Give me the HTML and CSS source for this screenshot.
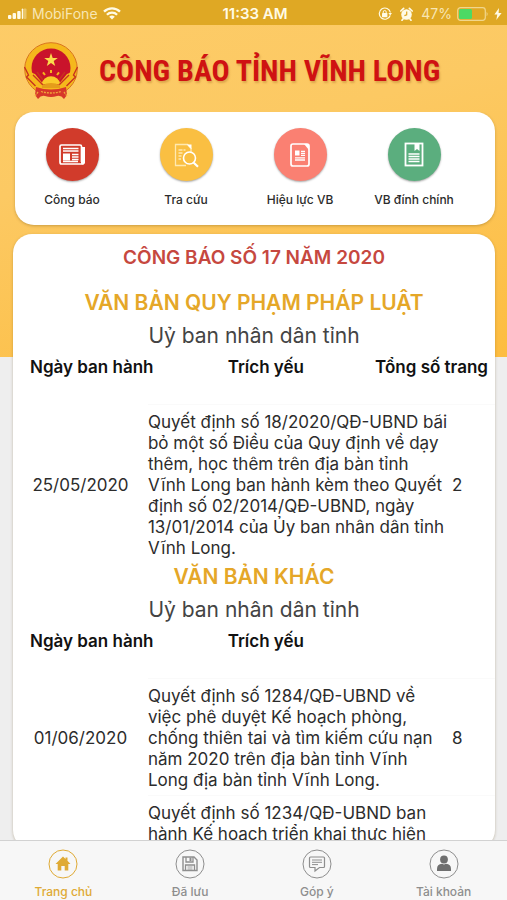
FILE: index.html
```html
<!DOCTYPE html>
<html lang="vi">
<head>
<meta charset="utf-8">
<meta name="viewport" content="width=device-width, initial-scale=1">
<title>Công báo tỉnh Vĩnh Long</title>
<link rel="stylesheet" href="styles.css">
</head>
<body>
<div class="app">
  <div class="status">
    <div class="status-side">
      <svg class="signal" width="19" height="12" viewBox="0 0 19 12"><g fill="#fffbe6"><rect x="0" y="7" width="3.4" height="4" rx="1"/><rect x="4.6" y="5" width="3.4" height="6" rx="1"/><rect x="9.2" y="3" width="3.4" height="8" rx="1"/><rect x="13.8" y="0.500" width="1.400" height="10.500" rx=".7"/><rect x="15.500" y="0.500" width="3" height="10.500" rx="1" opacity=".35"/></g></svg>
      <span class="carrier">MobiFone</span>
      <svg width="18" height="13" viewBox="0 0 18 13"><g fill="none" stroke="#fffbe6" stroke-width="2.300"><path d="M1 4.700a11.500 11.500 0 0 1 16 0"/><path d="M3.900 7.800a7.300 7.300 0 0 1 10.200 0"/></g><path d="M9 12.500L6.200 9.800a4 4 0 0 1 5.600 0z" fill="#fffbe6"/></svg>
    </div>
    <span class="clock">11:33 AM</span>
    <div class="status-side status-end">
      <svg width="14" height="14" viewBox="0 0 14 14"><path d="M12.200 8.500A5.600 5.600 0 1 1 12.400 5.500" fill="none" stroke="#fffbe6" stroke-width="1.200"/><path d="M10.400 6h3.600l-1.800 2.600z" fill="#fffbe6"/><rect x="4" y="6" width="5.400" height="4.200" rx=".6" fill="#fffbe6"/><path d="M5.200 6.200V5a1.500 1.500 0 0 1 3 0v1.200" fill="none" stroke="#fffbe6"/></svg>
      <svg class="alarm" width="13" height="14" viewBox="0 0 13 14"><circle cx="6.500" cy="7.500" r="5.300" fill="#fffbe6"/><path d="M.8 4L3.600 1.400M12.200 4L9.400 1.400M3 12l-1 1.300M10 12l1 1.300" stroke="#fffbe6" stroke-width="1.700" stroke-linecap="round"/><path d="M6.700 4.400v3.400l-2.300.8" fill="none" stroke="#dfa824" stroke-width="1.200"/></svg>
      <span class="percent">47%</span>
      <svg width="32" height="14" viewBox="0 0 32 14"><rect x=".7" y=".7" width="27.600" height="12.600" rx="2.800" fill="none" stroke="#f1d68d" stroke-width="1.200"/><rect x="2" y="2" width="13" height="10" rx="1.500" fill="#4cd964"/><path d="M29.600 4.700q2 2.300 0 4.600z" fill="#f1d68d"/></svg>
      <svg width="8" height="12" viewBox="0 0 8 12"><path d="M5 0L.4 6.600h2.900L2.300 12 7.600 5H4.600z" fill="#fffbe6"/></svg>
    </div>
  </div>

  <header class="brand">
    <svg class="emblem" width="56" height="58" viewBox="0 0 56 58">
      <circle cx="28" cy="27" r="26.300" fill="#f5b81c" stroke="#d9751f" stroke-width="1"/>
      <circle cx="28" cy="26" r="19.500" fill="#c9132b"/>
      <path d="M28 11l1.700 4.900 5.100.1-4.100 3.100 1.500 5-4.200-3-4.200 3 1.500-5-4.100-3.100 5.100-.1z" fill="#fbdc4c"/>
      <path d="M18.500 42a9.700 9.700 0 0 1 19 0z" fill="#fbc92b"/>
      <path d="M28 31v-3M22 33l-2-2.600M34 33l2-2.600" stroke="#f5b81c" stroke-width="2"/>
      <path d="M2 25c4 1 6 6 10 7l9 11-7 6L5 39zM54 25c-4 1-6 6-10 7l-9 11 7 6 9-10z" fill="#f5b81c"/>
      <path d="M1.500 25l4 8-2 2 9 9M54.500 25l-4 8 2 2-9 9M10 33l10 10M46 33L36 43M14 30l6 8M42 30l-6 8" fill="none" stroke="#c8321f" stroke-width="1.400"/>
      <path d="M19 43q9-4 18 0v3H19z" fill="#e59c1a"/>
      <path d="M13 45q15 5 30 0l1 8-3 4q-3-4-7-3-6 2-12 0-4-1-7 3l-3-4z" fill="#d7372a"/>
      <path d="M18 49.500q10 3 20 0M12 54l3-4M44 54l-3-4" fill="none" stroke="#f0a63a" stroke-width="1.300" stroke-dasharray="2 1"/>
    </svg>
    <h1>CÔNG BÁO TỈNH VĨNH LONG</h1>
  </header>

  <main>
    <nav class="card menu" aria-label="Chức năng">
      <a href="#cong-bao"><span class="disc red"><svg width="28" height="24" viewBox="0 0 28 24"><path d="M24 4.500V19q0 2 1.500 2H3.500Q2 21 2 19V3.500Q2 2 3.500 2H22q1.500 0 1.500 1.500V19" fill="none" stroke="#fff" stroke-width="1.700"/><path d="M23.500 4H27v15.500q0 2-2 2t-2-2z" fill="#fff"/><path d="M5 5.500h15.500M5 8h15.500M14 11.500h6.500M14 14h6.500M14 16.500h6.500M5 18.500h15" stroke="#fff" stroke-width="1.500"/><rect x="5" y="10.500" width="7" height="7" fill="#fff"/></svg></span>Công báo</a>
      <a href="#tra-cuu"><span class="disc yellow"><svg width="26" height="26" viewBox="0 0 26 26"><path d="M13 23.500H2.500v-21h12l3.500 4V10" fill="none" stroke="#ffe9b0" stroke-width="1.300"/><path d="M14 2.500h4.500v4.700z" fill="#fff"/><path d="M5.500 8h7M5.500 11h4.500M5.500 14h3M5.500 17h2.500" stroke="#ffe9b0" stroke-width="1.500" stroke-dasharray="4 1"/><circle cx="16.500" cy="16" r="6" fill="none" stroke="#fff" stroke-width="1.600"/><path d="M20.500 20.500l4.500 4.300" stroke="#fff" stroke-width="2.200"/></svg></span>Tra cứu</a>
      <a href="#hieu-luc"><span class="disc pink"><svg width="20" height="24" viewBox="0 0 20 24"><rect x="1" y="1" width="18" height="22" rx="2" fill="none" stroke="#fff" stroke-width="1.700"/><path d="M14 1h5v6z" fill="#fff"/><rect x="5" y="7.500" width="4.500" height="5" fill="#fff"/><path d="M11 8.300h4M11 10.300h4M11 12.300h4M5 14.800h10M5 17h10" stroke="#fff" stroke-width="1.300"/></svg></span>Hiệu lực VB</a>
      <a href="#dinh-chinh"><span class="disc green"><svg width="20" height="25" viewBox="0 0 20 25"><rect x="1.500" y="1.500" width="17" height="22" fill="none" stroke="#fff" stroke-width="1.800"/><path d="M10.500 1.500h5V9L13 7l-2.500 2z" fill="#fff"/><path d="M4.500 12h11M4.500 14.500h11M4.500 17h11M4.500 19.500h11" stroke="#fff" stroke-width="1.300"/></svg></span>VB đính chính</a>
    </nav>

    <section class="card gazette">
      <h2>CÔNG BÁO SỐ 17 NĂM 2020</h2>

      <h3>VĂN BẢN QUY PHẠM PHÁP LUẬT</h3>
      <h4>Uỷ ban nhân dân tỉnh</h4>
      <table>
        <colgroup><col class="c-date"><col class="c-text"><col class="c-gap"><col class="c-pages"></colgroup>
        <thead><tr><th class="h-date">Ngày ban hành</th><th class="h-text">Trích yếu</th><th class="h-pages" colspan="2">Tổng số trang</th></tr></thead>
        <tbody>
          <tr><td class="date">25/05/2020</td><td class="text" colspan="2">Quyết định số 18/2020/QĐ-UBND bãi<br>bỏ một số Điều của Quy định về dạy<br>thêm, học thêm trên địa bàn tỉnh<br>Vĩnh Long ban hành kèm theo Quyết<br>định số 02/2014/QĐ-UBND, ngày<br>13/01/2014 của Ủy ban nhân dân tỉnh<br>Vĩnh Long.</td><td class="pages">2</td></tr>
        </tbody>
      </table>

      <h3 class="next">VĂN BẢN KHÁC</h3>
      <h4>Uỷ ban nhân dân tỉnh</h4>
      <table>
        <colgroup><col class="c-date"><col class="c-text"><col class="c-gap"><col class="c-pages"></colgroup>
        <thead><tr><th class="h-date">Ngày ban hành</th><th class="h-text">Trích yếu</th><td class="h-pages" colspan="2"></td></tr></thead>
        <tbody>
          <tr><td class="date">01/06/2020</td><td class="text" colspan="2">Quyết định số 1284/QĐ-UBND về<br>việc phê duyệt Kế hoạch phòng,<br>chống thiên tai và tìm kiếm cứu nạn<br>năm 2020 trên địa bàn tỉnh Vĩnh<br>Long địa bàn tỉnh Vĩnh Long.</td><td class="pages">8</td></tr>
          <tr><td class="date"></td><td class="text" colspan="2">Quyết định số 1234/QĐ-UBND ban<br>hành Kế hoạch triển khai thực hiện</td><td class="pages"></td></tr>
        </tbody>
      </table>
    </section>
  </main>

  <nav class="tabs" aria-label="Điều hướng">
    <a class="active" href="#trang-chu"><svg width="30" height="30" viewBox="0 0 30 30"><circle cx="15" cy="15" r="14" fill="none" stroke="currentColor"/><path d="M15 7.500l2.500 2.400V8.500h2v3.300l3 3.200h-2.200v6.500h-3.600V17h-3.400v4.500H9.700V15H7.500z" fill="currentColor"/></svg>Trang chủ</a>
    <a href="#da-luu"><svg width="30" height="30" viewBox="0 0 30 30"><g fill="none" stroke="currentColor"><circle cx="15" cy="15" r="14"/><path d="M8 8h11l3 3v10.500H8z" stroke-width="1.400"/><path d="M11 8v5h7V8M10.500 21.500V16h9v5.500" stroke-width="1.300"/><path d="M12.500 18h5M12.500 20h5" stroke-width=".8"/></g><path d="M14.500 8.500h2V12h-2z" fill="currentColor"/></svg>Đã lưu</a>
    <a href="#gop-y"><svg width="30" height="30" viewBox="0 0 30 30"><g fill="none" stroke="currentColor"><circle cx="15" cy="15" r="14"/><path d="M8.500 8h13q1 0 1 1v8.500q0 1-1 1h-4L13 22v-3.500H8.500q-1 0-1-1V9q0-1 1-1z" stroke-width="1.200"/><path d="M10 11h10M10 13.300h10M10 15.600h6"/></g></svg>Góp ý</a>
    <a href="#tai-khoan"><svg width="30" height="30" viewBox="0 0 30 30"><circle cx="15" cy="15" r="14" fill="none" stroke="currentColor"/><g fill="#6f6f6f"><circle cx="15" cy="10.500" r="3.900"/><path d="M8 22v-2q0-5 5-5.200l2 .8 2-.8q5 .2 5 5.200v2z"/></g></svg>Tài khoản</a>
  </nav>
</div>
</body>
</html>
```
FILE: styles.css
```css
* { box-sizing: border-box; }

body {
  margin: 0;
  background: #eeeeee;
  color: #2c2c2c;
  font-family: Inter, "Noto Sans", sans-serif;
}

a { color: inherit; text-decoration: none; }
svg { display: block; flex: none; }

.app {
  display: flex;
  flex-direction: column;
  height: 100vh;
  background: linear-gradient(165deg, #fdcc68 0%, #fcc963 40%, #fdbd40 100%) no-repeat top / 100% 357px;
}

.status {
  display: grid;
  grid-template-columns: 1fr auto 1fr;
  align-items: center;
  flex: none;
  height: 25px;
  padding: 2px 5px 0 8px;
  background: #dfa824;
  color: #fffbe6;
  font-size: 14px;
}
.status-side { display: flex; align-items: center; gap: 5px; }
.status-end { justify-content: flex-end; }
.carrier, .percent { color: #f8e6b3; }
.clock { font-size: 15px; font-weight: 600; }
.alarm { margin: 0 3px; }

.brand {
  display: flex;
  align-items: center;
  gap: 20px;
  flex: none;
  height: 87px;
  padding: 4px 20px 0 23px;
}
h1 {
  margin: 0;
  color: #cf1212;
  font-family: "Roboto Condensed", "Liberation Sans Narrow", Roboto, sans-serif;
  font-size: 30px;
  font-weight: 700;
  line-height: 36px;
  white-space: nowrap;
  text-shadow: 1px 2px 2px rgba(150, 90, 20, 0.3);
}

main {
  display: flex;
  flex-direction: column;
  flex: 1;
  gap: 9px;
  min-height: 0;
  padding: 0 12px 0 13px;
  overflow: hidden;
}
.card {
  flex: none;
  background: #ffffff;
  border-radius: 19px;
  box-shadow: 0 1px 3px rgba(90, 60, 0, 0.3);
}

.menu {
  display: grid;
  grid-template-columns: repeat(4, 1fr);
  margin-left: 2px;
  padding: 16px 24px 16px 0;
}
.menu a {
  display: flex;
  flex-direction: column;
  align-items: center;
  gap: 9px;
  font-size: 12px;
  font-weight: 500;
  line-height: 19px;
}
.disc {
  display: grid;
  place-items: center;
  width: 53px;
  height: 53px;
  border-radius: 50%;
  box-shadow: 0 1px 2px rgba(0, 0, 0, 0.35);
}
.red { background: #d13b2b; }
.yellow { background: #fabf42; }
.pink { background: #fa8072; }
.green { background: #5bae7e; }

.gazette { padding-top: 10px; }
h2, h3, h4 { margin: 0; text-align: center; }
h2 { color: #c6483f; font-size: 19px; font-weight: 600; line-height: 28px; }
h3 { margin-top: 17px; color: #e5a728; font-size: 21px; font-weight: 600; line-height: 28px; }
h3.next { margin-top: 0; }
h4 { margin-top: 4px; color: #444444; font-size: 21px; font-weight: 400; line-height: 30px; }

table { width: 100%; border-collapse: collapse; table-layout: fixed; }
.c-date { width: 28%; }
.c-text { width: 46%; }
.c-gap { width: 15%; }
.c-pages { width: 11%; }
th {
  padding: 5px 0 26px;
  color: #111111;
  font-size: 17px;
  font-weight: 600;
  line-height: 22px;
  white-space: nowrap;
}
.h-date { padding-left: 17px; text-align: left; }
.h-text { padding-left: 14px; }
.h-pages { padding-right: 7px; text-align: right; }
tbody td { padding: 8px 0 4px; font-size: 17px; line-height: 21px; }
.text, .pages { box-shadow: inset 0 1px #fafafa; }
.date { text-align: center; }
.text { white-space: nowrap; }
tbody .pages { padding-left: 10px; }

.tabs {
  display: grid;
  grid-template-columns: repeat(4, 1fr);
  flex: none;
  height: 60px;
  padding-top: 8px;
  background: #f7f7f7;
  border-top: 1px solid #d2d2d2;
  z-index: 1;
}
.tabs a {
  display: flex;
  flex-direction: column;
  align-items: center;
  gap: 4px;
  color: #8e8e8e;
  font-size: 12px;
  font-weight: 500;
  line-height: 18px;
}
.tabs .active { color: #dfaa35; }
```
